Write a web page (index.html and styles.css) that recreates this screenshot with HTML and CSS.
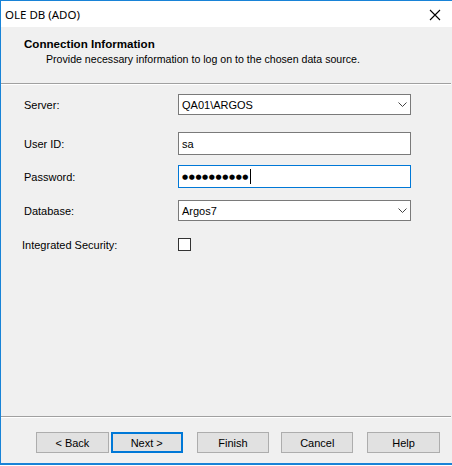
FILE: index.html
```html
<!DOCTYPE html>
<html>
<head>
  <meta charset="utf-8">
  <title>OLE DB (ADO)</title>
  <link rel="stylesheet" href="styles.css">
</head>
<body>
  <div class="window">
    <div class="titlebar">
      <span class="title">OLE DB (ADO)</span>
      <svg class="close" width="12" height="12" viewBox="0 0 12 12">
        <path d="M1 1 L11 11 M11 1 L1 11" stroke="#000" stroke-width="1.1" fill="none"/>
      </svg>
    </div>

    <div class="header">
      <div class="header-title">Connection Information</div>
      <div class="header-sub">Provide necessary information to log on to the chosen data source.</div>
    </div>
    <div class="sep"></div>

    <div class="form">
      <div class="row row-server">
        <label class="lbl">Server:</label>
        <div class="field combo">
          <span class="value">QA01\ARGOS</span>
          <svg class="chev" width="9" height="5" viewBox="0 0 9 5">
            <path d="M0.5 0.5 L4.5 4.5 L8.5 0.5" stroke="#444" fill="none"/>
          </svg>
        </div>
      </div>
      <div class="row row-user">
        <label class="lbl">User ID:</label>
        <div class="field text"><span class="value">sa</span></div>
      </div>
      <div class="row row-pass">
        <label class="lbl">Password:</label>
        <div class="field text focused">
          <span class="dots">●●●●●●●●●●</span><span class="caret"></span>
        </div>
      </div>
      <div class="row row-db">
        <label class="lbl">Database:</label>
        <div class="field combo">
          <span class="value">Argos7</span>
          <svg class="chev" width="9" height="5" viewBox="0 0 9 5">
            <path d="M0.5 0.5 L4.5 4.5 L8.5 0.5" stroke="#444" fill="none"/>
          </svg>
        </div>
      </div>
      <div class="row row-check">
        <label class="lbl lbl-wide">Integrated Security:</label>
        <span class="checkbox"></span>
      </div>
    </div>

    <div class="sep"></div>
    <div class="buttons">
      <button class="btn back">&lt; Back</button>
      <button class="btn default">Next &gt;</button>
      <button class="btn">Finish</button>
      <button class="btn">Cancel</button>
      <button class="btn">Help</button>
    </div>
  </div>
</body>
</html>
```

FILE: styles.css
```css
body {
  margin: 0;
  padding: 0;
  background: #fff;
  font-family: "Liberation Sans", Arial, sans-serif;
  font-size: 11px;
  color: #000;
}
.window {
  width: 451px;
  height: 462px;
  border-top: 1px solid #1883d7;
  border-left: 1px solid #1883d7;
  border-bottom: 2px solid #1883d7;
  background: #f0f0f0;
  display: flex;
  flex-direction: column;
  overflow: hidden;
}
.titlebar {
  height: 26px;
  background: #fff;
  display: flex;
  align-items: center;
  justify-content: space-between;
  padding: 0 11px 0 4px;
}
.title {
  font-family: "Noto Sans", sans-serif;
  font-size: 11.5px;
}
.close {
  margin-top: 1px;
}
.header {
  height: 56px;
  padding-left: 23px;
  box-sizing: border-box;
  padding-top: 10px;
}
.header-title {
  font-family: "Liberation Sans", Arial, sans-serif;
  font-weight: bold;
  font-size: 11.6px;
  height: 15px;
}
.header-sub {
  font-family: "Liberation Sans", Arial, sans-serif;
  font-size: 10.6px;
  margin-left: 22px;
  margin-top: 1px;
}
.sep {
  height: 1px;
  background: #a0a0a0;
  border-bottom: 1px solid #fff;
  margin-right: 1px;
}
.form {
  flex: 1;
  padding-left: 23px;
}
.row {
  display: flex;
  align-items: center;
}
.row-server { margin-top: 9px; height: 21px; }
.row-user { margin-top: 17px; height: 23px; }
.row-pass { margin-top: 10px; height: 23px; }
.row-db { margin-top: 12px; height: 21px; }
.row-check { margin-top: 17px; height: 13px; }
.lbl {
  width: 154px;
}
.lbl-wide {
  margin-left: -2px;
  width: 156px;
}
.field {
  width: 233px;
  height: 100%;
  box-sizing: border-box;
  background: #fff;
  display: flex;
  align-items: center;
  padding-left: 3px;
}
.combo {
  border: 1px solid #7a7a7a;
  justify-content: space-between;
  padding-right: 3px;
}
.text {
  border: 1px solid #7a7a7a;
}
.focused {
  border-color: #0078d7;
}
.dots {
  font-family: "DejaVu Sans", sans-serif;
  font-size: 7px;
  letter-spacing: 0.6px;
}
.caret {
  display: inline-block;
  width: 1px;
  height: 15px;
  background: #000;
  margin-left: 1px;
}
.checkbox {
  width: 13px;
  height: 13px;
  box-sizing: border-box;
  border: 1px solid #333;
  background: #fff;
}
.buttons {
  height: 45px;
  display: flex;
  padding-left: 35px;
  padding-top: 14px;
  box-sizing: border-box;
}
.btn {
  width: 73px;
  height: 21px;
  box-sizing: border-box;
  border: 1px solid #adadad;
  background: #e1e1e1;
  font-family: "Liberation Sans", Arial, sans-serif;
  font-size: 11px;
  padding: 0;
  margin-right: 12px;
}
.back {
  margin-right: 2px;
}
.default {
  border: 2px solid #0078d7;
  width: 72px;
  margin-right: 14px;
}
.btn:nth-child(4) {
  width: 72px;
  margin-right: 14px;
}
```
